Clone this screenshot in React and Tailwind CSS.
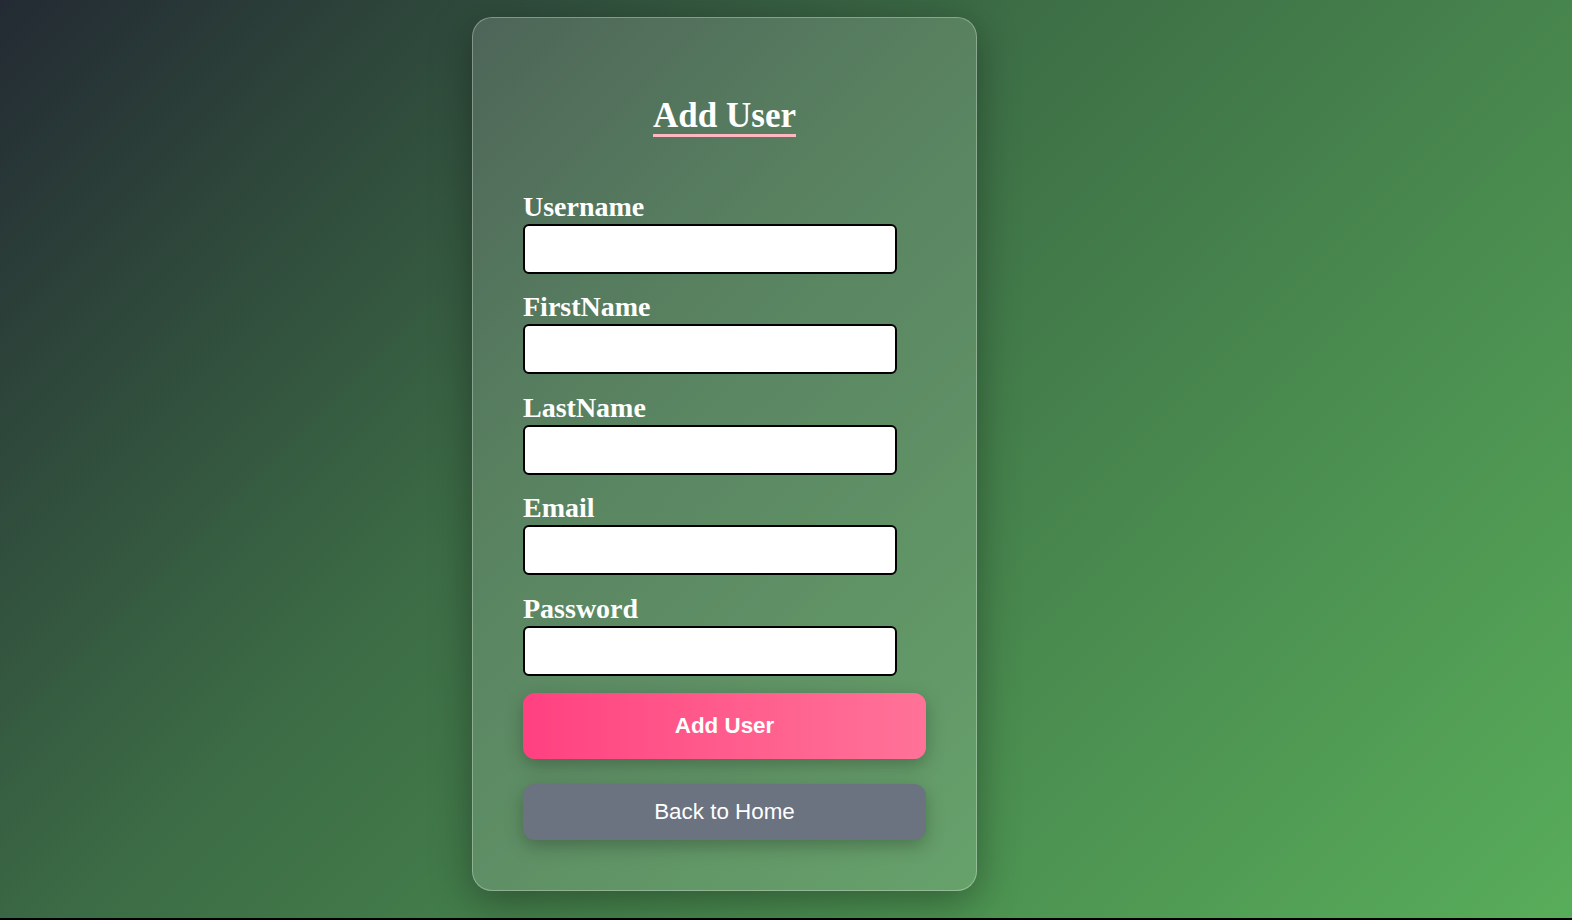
import { useState } from "react";

const fields = [
  { name: "username", label: "Username", type: "text" },
  { name: "firstName", label: "FirstName", type: "text" },
  { name: "lastName", label: "LastName", type: "text" },
  { name: "email", label: "Email", type: "email" },
  { name: "password", label: "Password", type: "password" },
];

const App = () => {
  const [form, setForm] = useState({
    username: "",
    firstName: "",
    lastName: "",
    email: "",
    password: "",
  });

  const handleChange = (e) => {
    setForm({ ...form, [e.target.name]: e.target.value });
  };

  return (
    <div className="min-h-[920px] bg-black">
      <div className="h-[918px] bg-[linear-gradient(135deg,#232a33_0%,#3c6c45_40%,#58ad5a_100%)] pl-[472px] pt-[17px]">
        <div className="w-[505px] rounded-[20px] border border-white/30 bg-white/15 px-[50px] pt-[72px] pb-[50px] shadow-[0_10px_40px_rgba(0,0,0,0.35)] font-['Liberation_Serif',serif]">
          <h1 className="text-center text-[35px] font-bold text-white">
            <span className="inline-block leading-[36px] border-b-[3px] border-[#ffb6c1]">
              Add User
            </span>
          </h1>

          <form className="mt-[48px]" onSubmit={(e) => e.preventDefault()}>
            {fields.map((f) => (
              <div key={f.name} className="mb-[17.5px]">
                <label
                  htmlFor={f.name}
                  className="block text-[28px] leading-[32px] font-bold text-white"
                >
                  {f.label}
                </label>
                <input
                  id={f.name}
                  name={f.name}
                  type={f.type}
                  value={form[f.name]}
                  onChange={handleChange}
                  className="mt-[1px] block h-[50px] w-[374px] rounded-[6px] border-2 border-black bg-white px-2 text-lg outline-none"
                />
              </div>
            ))}

            <button
              type="submit"
              className="mt-[1px] flex h-[66px] w-full items-center justify-center rounded-[12px] bg-linear-to-r from-[#ff4081] to-[#ff7298] text-[22.4px] font-bold text-white shadow-[0_6px_18px_rgba(0,0,0,0.25)] font-['Liberation_Sans',Arial,sans-serif]"
            >
              Add User
            </button>
            <button
              type="button"
              className="mt-[25px] flex h-[56px] w-full items-center justify-center rounded-[12px] bg-[#6b7280] text-[22.4px] text-white shadow-[0_6px_18px_rgba(0,0,0,0.25)] font-['Liberation_Sans',Arial,sans-serif]"
            >
              Back to Home
            </button>
          </form>
        </div>
      </div>
    </div>
  );
};

export default App;
